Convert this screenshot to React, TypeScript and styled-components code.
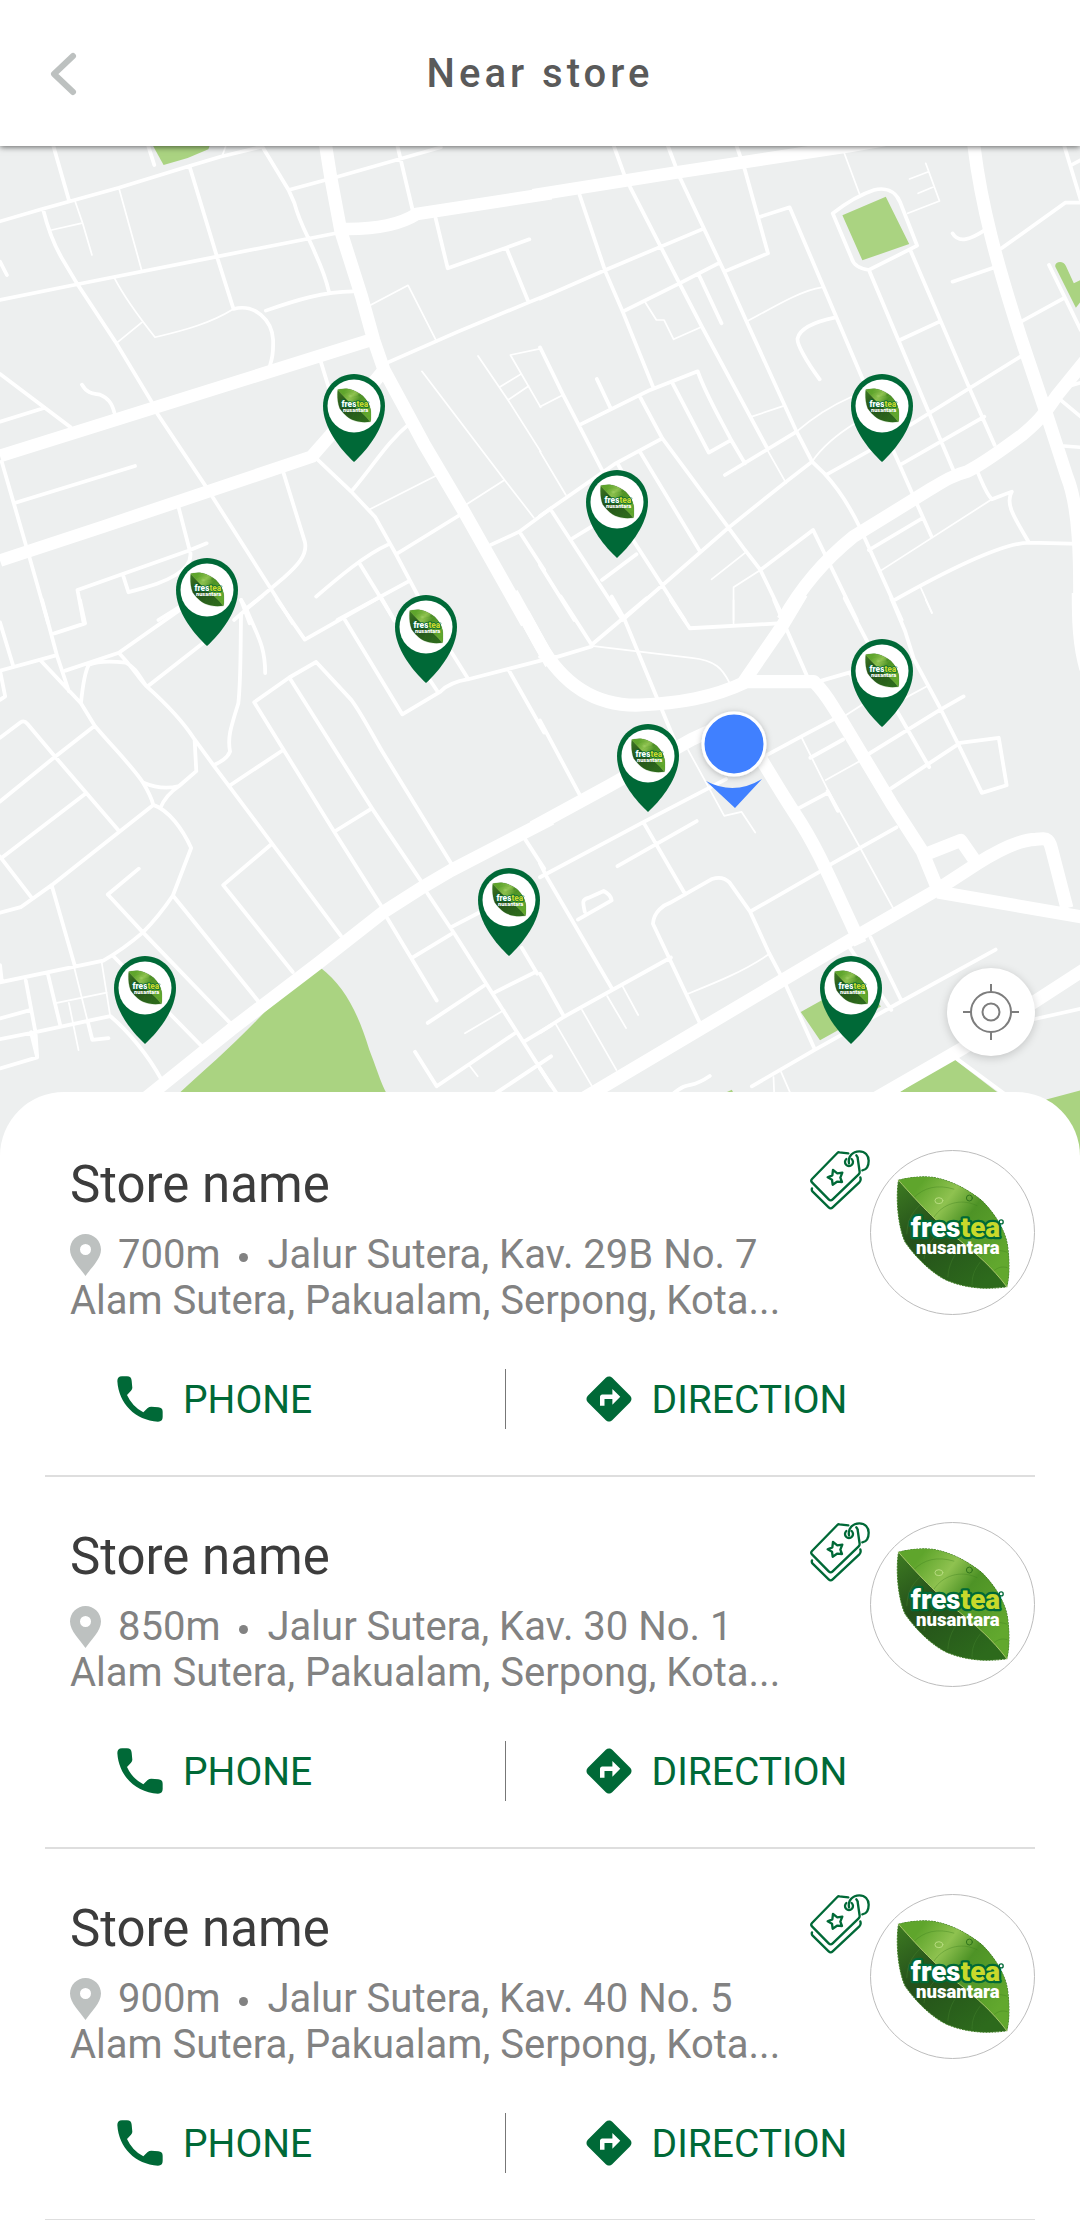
import React from "react";
import styled, { createGlobalStyle } from "styled-components";
import { MdDirections } from "react-icons/md";

const GlobalStyle = createGlobalStyle`
  *, *::before, *::after { box-sizing: border-box; }
  body {
    margin: 0;
    background: #ffffff;
    font-family: Roboto, "Liberation Sans", sans-serif;
  }
  button { font: inherit; color: inherit; background: none; border: 0; padding: 0; cursor: pointer; }
  h1, h2, p, ul { margin: 0; padding: 0; }
`;

const GREEN = "#006937";
const MAP_W = 1080;
const MAP_H = 1010;

/* ---------- layout ---------- */

const Page = styled.div`
  display: flex;
  flex-direction: column;
  min-height: 100vh;
`;

const Header = styled.header`
  display: grid;
  grid-template-columns: 124px 1fr 124px;
  align-items: center;
  height: 146px;
  padding-top: 2px;
  background: #ffffff;
  box-shadow: 0 1px 6px rgba(0, 0, 0, 0.6);
  position: relative;
  z-index: 1;
`;

const BackButton = styled.button`
  display: flex;
  align-items: center;
  justify-content: center;
  height: 100%;
`;

const Title = styled.h1`
  font-size: 40px;
  line-height: 48px;
  font-weight: 500;
  letter-spacing: 4px;
  text-align: center;
  color: #5a5a5a;
`;

const MapArea = styled.section`
  position: relative;
  aspect-ratio: ${MAP_W} / ${MAP_H};
  overflow: hidden;
  background: #edefef;
`;

const MapDrawing = styled.svg`
  display: block;
  width: 100%;
  height: 100%;
`;

const Marker = styled.div<{ $x: number; $y: number }>`
  position: absolute;
  left: calc(100% * ${(p) => p.$x} / ${MAP_W});
  top: calc(100% * ${(p) => p.$y} / ${MAP_H});
  transform: translateX(-50%);
  display: grid;
  justify-items: center;
`;

const LocateButton = styled.button`
  position: absolute;
  right: 45px;
  bottom: 100px;
  display: flex;
  align-items: center;
  justify-content: center;
  width: 88px;
  height: 88px;
  border-radius: 50%;
  background: #ffffff;
  box-shadow: 0 2px 10px rgba(0, 0, 0, 0.18);
`;

const Sheet = styled.main`
  position: relative;
  margin-top: -64px;
  padding: 13px 45px 0;
  border-radius: 64px 64px 0 0;
  background: #ffffff;
`;

const StoreList = styled.ul`
  list-style: none;
`;

const StoreItem = styled.li`
  display: flex;
  flex-direction: column;
  gap: 46px;
  padding: 45px 0 46px;
  border-bottom: 2px solid #dedede;
  &:last-child { border-bottom-width: 1px; }
`;

const Summary = styled.div`
  display: flex;
  align-items: flex-start;
  height: 173px;
`;

const Info = styled.div`
  flex: 1;
  min-width: 0;
  padding: 5px 0 0 25px;
`;

const StoreName = styled.h2`
  margin-bottom: 17px;
  font-size: 51px;
  line-height: 60px;
  font-weight: 400;
  color: #3c3c3c;
`;

const AddressLine = styled.p`
  display: flex;
  align-items: center;
  font-size: 40px;
  line-height: 46px;
  color: #828282;
  white-space: nowrap;
`;

const Distance = styled.span`
  padding-left: 17px;
`;

const Dot = styled.span`
  width: 9px;
  height: 9px;
  margin: 4px 20px 0 18px;
  border-radius: 50%;
  background: #828282;
`;

const LogoFrame = styled.div`
  width: 165px;
  height: 165px;
  border: 1px solid #bdbdbd;
  border-radius: 50%;
`;

const Actions = styled.div`
  display: grid;
  grid-template-columns: 46fr 1px 53fr;
  height: 60px;
`;

const Divider = styled.span`
  background: #777777;
`;

const ActionButton = styled.button<{ $inset: number }>`
  display: flex;
  align-items: center;
  gap: 16px;
  padding-left: ${(p) => p.$inset}px;
  font-size: 39px;
  line-height: 46px;
  color: ${GREEN};
`;

const ActionLabel = styled.span`
  padding-top: 2px;
`;

/* ---------- drawings ---------- */

const BackIcon = () => (
  <svg width="32" height="46" viewBox="0 0 32 46" fill="none" stroke="#bdc1c0" strokeWidth="6" strokeLinecap="round" strokeLinejoin="round" aria-hidden="true">
    <path d="M27 5L8 23L27 41" />
  </svg>
);

const PhoneIcon = () => (
  <svg width="54" height="54" viewBox="0 0 162 162" fill={GREEN} aria-hidden="true">
    <path d="M27 13H42Q55 13 56 26L58 47Q58 52 54 56L42 69Q58 104 91 121L104 108Q109 104 115 104L136 106Q149 107 149 119V135Q149 149 135 149C67 145 17 95 13 27Q13 13 27 13Z" />
  </svg>
);

const PinIcon = () => (
  <svg width="31" height="42" viewBox="0 0 31 42" fill="#bdc1c0" fillRule="evenodd" aria-hidden="true">
    <path d="M15.500 0C24 0 31 7 31 15.500C31 25 21 34 15.500 42C10 34 0 25 0 15.500C0 7 7 0 15.500 0ZM15.500 10A5.500 5.500 0 1 0 15.500 21A5.500 5.500 0 1 0 15.500 10Z" />
  </svg>
);

const TagsIcon = () => (
  <svg width="60" height="60" viewBox="0 0 180 180" fill="none" stroke={GREEN} strokeWidth="7" strokeLinecap="round" strokeLinejoin="round" aria-label="Promo" role="img">
    <path d="M115 10L88 7Q85 6 82 9L6 87Q1 92 6 97L56 148Q62 154 68 148L146 73Q149 70 149 66L143 24Q143 20 139 16" />
    <path d="M6 115Q4 121 8 125L56 172Q62 178 68 172L148 97Q154 91 151 82" />
    <path d="M125 27A12 12 0 1 1 109 27M117 40C113 20 128 4 148 4C165 4 176 16 176 32C176 48 169 59 157 61" />
    <path d="M69 60L82 70L97 68L91 83L96 96L81 95L68 104L66 89L53 82L67 76Z" />
  </svg>
);

const LocateIcon = () => (
  <svg width="56" height="56" viewBox="0 0 56 56" fill="none" stroke="#7d7d7d" strokeWidth="2" aria-hidden="true">
    <circle cx="28" cy="28" r="20" />
    <circle cx="28" cy="28" r="8.500" />
    <path d="M28 0V8M28 48V56M0 28H8M48 28H56" />
  </svg>
);

const LEAF =
  "M83 88C125 78 160 76 190 80C245 90 295 118 335 150C375 190 405 240 412 285C419 340 417 380 410 410C340 420 280 412 228 390C185 370 135 322 103 275C82 230 74 145 83 88Z";
const LEAF_TOP =
  "M83 88C125 78 160 76 190 80C245 90 295 118 335 150C375 190 405 240 412 285C419 340 417 380 410 410C365 350 320 312 268 270C220 235 150 165 83 88Z";

const LeafGradients = () => (
  <defs>
    <linearGradient id="leafDark" x1="0" y1="0" x2="0.700" y2="1">
      <stop offset="0" stopColor="#3f7d22" />
      <stop offset="0.450" stopColor="#24501a" />
      <stop offset="1" stopColor="#2d6a1c" />
    </linearGradient>
    <linearGradient id="leafLight" x1="0.100" y1="0.200" x2="0.900" y2="0.800">
      <stop offset="0" stopColor="#5fa52c" />
      <stop offset="0.280" stopColor="#8fc250" />
      <stop offset="0.520" stopColor="#4e9326" />
      <stop offset="1" stopColor="#62a82e" />
    </linearGradient>
  </defs>
);

const LogoArt = () => (
  <>
    <path d={LEAF} fill="url(#leafDark)" stroke="#3a7a1f" strokeWidth="3" strokeDasharray="6 3" />
    <path d={LEAF_TOP} fill="url(#leafLight)" />
    <g fill="none" strokeLinecap="round">
      <path d="M130 140C160 110 200 100 250 115M190 200C215 160 270 140 320 165M330 318C350 300 380 295 410 305M370 362C385 350 395 348 411 352" stroke="#3b7d1e" strokeWidth="3" opacity="0.350" />
      <path d="M150 160C120 190 110 210 108 250M215 235C180 270 165 290 160 325M275 285C245 320 235 345 232 380M330 335C310 360 305 380 305 405" stroke="#4b8a30" strokeWidth="3" opacity="0.350" />
      <path d="M83 88C150 165 220 235 268 270C320 312 365 350 410 410" stroke="#a9c66a" strokeWidth="3" />
      <ellipse cx="205" cy="150" rx="12" ry="9" stroke="#b7dc80" strokeWidth="3" />
      <circle cx="297" cy="142" r="9" stroke="#2f741b" strokeWidth="3" />
    </g>
    <g fontFamily='Roboto, "Open Sans", sans-serif' fontWeight="900" textAnchor="middle">
      <text x="255" y="260" fontSize="84" fill="#ffffff" stroke={GREEN} strokeWidth="14" strokeLinejoin="round" paintOrder="stroke">
        fres<tspan fill="#c8d92b">tea</tspan>
      </text>
      <text x="262" y="310" fontSize="56" fill="#ffffff">nusantara</text>
    </g>
    <circle cx="393" cy="214" r="6" fill="#ffffff" stroke={GREEN} strokeWidth="4" />
  </>
);

const StoreLogo = () => (
  <svg width="163" height="163" viewBox="0 0 492 492" role="img" aria-label="Frestea Nusantara">
    <LogoArt />
  </svg>
);

const StorePin = () => (
  <svg width="62" height="88" viewBox="0 0 62 88" role="img" aria-label="Store location">
    <path d="M31 0C48 0 62 14 62 32C62 54 44 76 31 88C18 76 0 54 0 32C0 14 14 0 31 0Z" fill={GREEN} />
    <circle cx="31" cy="32" r="26.500" fill="#ffffff" />
    <svg x="6.500" y="7" width="49" height="49" viewBox="0 0 492 492">
      <LogoArt />
    </svg>
  </svg>
);

const UserPin = () => (
  <svg width="90" height="110" viewBox="0 0 90 110" role="img" aria-label="Your location">
    <defs>
      <filter id="userShadow" x="-20%" y="-20%" width="140%" height="140%">
        <feDropShadow dx="0" dy="1" stdDeviation="3" floodOpacity="0.250" />
      </filter>
    </defs>
    <path d="M17 76Q45 91 73 74L46 103Z" fill="#4080ff" />
    <circle cx="45" cy="39" r="31" fill="#4080ff" stroke="#ffffff" strokeWidth="3" filter="url(#userShadow)" />
  </svg>
);

type Tile = { transform: string; parks?: string; major: string; minor: string; lanes: string };

/* The street map is stored as four tiles, each with its own drawing units. */
const TILES: Tile[] = [
  {
    transform: "translate(0 -6) scale(0.3444 0.3333)",
    parks: "M435 0L475 75L545 54L605 28L615 0Z",
    major:
      "M943 0L960 110L990 275L1050 470L1085 600L1115 690L1230 910L1350 1120L1530 1450M1000 267C1080 268 1160 255 1210 222L1600 160M0 948L1070 602M0 1262L300 1160L905 950L960 885L1115 690",
    minor:
      "M150 0L200 180M0 244L120 208L345 143L550 78L640 50L760 20M425 0L448 75M0 480L225 433L630 350L975 280M125 208C140 270 160 320 180 355L225 433L335 605L440 785M455 818L595 1035L790 1352L850 1450M550 78L630 350L678 507C740 490 790 540 793 600C794 640 790 655 783 680M750 0L838 150L855 190C870 250 900 300 915 340C935 385 945 410 955 455M838 150L980 110L1280 22M1150 0L1198 210M772 512C860 480 940 455 1025 454M1265 235L1300 385L1470 323L1537 298M1470 323L1535 487M1125 668L1330 575L1535 487L1600 460M0 365L20 405M0 702L205 862M0 845L130 803M238 734C255 765 275 760 290 764C315 775 325 790 332 818M5 965L40 1090L85 1250L140 1450M40 1090L392 978M930 660L955 745M918 955L1020 1055L1090 1132L1150 1243L1220 1380M1190 850C1120 910 1090 970 1020 1055M822 995L885 1205C895 1245 860 1280 825 1312L715 1408L680 1440M518 1100L553 1240C555 1270 535 1290 510 1305C470 1330 430 1340 373 1357L358 1308M600 1210L545 1233L225 1350L243 1450M1150 1243L1335 1125M1425 1215L1508 1175L1600 1105M1508 1175L1580 1290M918 1370C980 1315 1060 1245 1125 1215M1045 1272L1145 1440M980 1440L1185 1325M700 1380L725 1450M460 1440L530 1395",
    lanes:
      "M218 184L240 250L267 345M150 270L235 250M345 143L411 390M332 414C365 480 410 540 450 592C540 570 610 550 678 507M411 548L340 608M1075 496L1185 436L1268 605M1070 1110L1270 1005M1225 694L1465 1020L1550 1133M1355 1093L1465 1020M1388 648L1475 780L1570 935M1450 742L1510 704M1475 780L1535 738M1570 626L1482 645L1570 802M655 20L645 48",
  },
  {
    transform: "translate(540 -6) scale(0.3444 0.3333)",
    parks:
      "M878 226L1004 170L1072 312L936 361ZM1497 382C1490 365 1520 358 1527 378L1550 430L1570 420L1570 485L1556 503Z",
    major:
      "M-20 166L400 97L900 18L1000 0M1258 0C1280 200 1330 380 1395 590L1470 820L1530 1010C1565 1100 1570 1250 1566 1450M1600 640L1500 768C1460 830 1440 850 1400 885C1340 930 1290 970 1240 995C1200 1005 1170 1025 1130 1050L910 1190C850 1240 770 1320 705 1440",
    minor:
      "M208 0L245 105L262 142L405 430L470 560L660 925M365 0L405 110L535 395L600 545L745 875L790 965L825 1000C870 1050 900 1100 930 1165L1050 1440M115 165L190 395L240 515L330 745M0 476L190 390L470 268M565 0L595 90L662 340L535 395M640 230L725 202L938 720M240 515L405 430L515 372M460 402L527 550M0 622L65 760L180 990M115 855L320 750L458 694C480 760 520 830 555 900L595 970M165 717L205 805M385 730L490 938L555 900M290 770L355 895L545 1160L595 1230L640 1290L710 1440M0 1128L220 970L355 895M225 970L300 1110M290 935L465 1235M537 1005L745 875M35 1115L240 1440M95 1195L150 1160M180 1320L280 1243M240 1440L545 1165L715 1025L790 965M270 1200L420 1440M0 1275L100 1440M640 1290L793 1170L920 1440M830 1005L960 930M955 1230L1110 1135M812 718C770 660 745 610 748 595C755 565 800 545 855 533M850 220C900 180 940 160 970 150C1000 142 1030 150 1045 185L1095 317L955 390C925 385 910 375 905 355ZM955 390L1130 820L1200 990M1075 330L1245 740L1320 915M1045 600L1160 545M1075 855L1130 820L1395 650M1045 975L1290 830M1025 930L1085 1070L1137 1190M1198 280C1215 310 1250 300 1295 268M1198 425L1325 380M1340 325L1525 188L1570 188M1520 10L1570 180M1543 75L1570 60M1478 375L1570 570M1400 543L1520 475M1500 770L1570 830M1530 740L1570 728M1520 918L1570 922M1270 995C1285 1030 1295 1060 1312 1078L1370 1055C1350 1090 1375 1130 1420 1208M1025 1383C1150 1310 1330 1210 1420 1208L1570 1212",
    lanes:
      "M882 35L928 163M1120 70L1160 183L1068 220M1073 117L1128 95M1098 160L1140 142M0 800L65 766M305 486L338 540L360 540L388 598L470 560M600 545C680 500 760 450 818 442M615 830L710 797M745 875C800 825 850 795 905 770M790 965C820 920 860 885 915 850M660 930L715 1030M0 935L75 1065M498 1318L600 1235M640 1290L562 1342L562 1440M985 1295L1312 1078M1105 1342L1138 1418",
  },
  {
    transform: "translate(0 454) scale(0.3444)",
    parks: "M520 1432C600 1360 680 1290 770 1195C830 1145 890 1095 930 1067C1000 1120 1040 1200 1072 1305C1090 1350 1105 1400 1122 1432L1122 1500L520 1500Z",
    major: "M1486 -20L1600 185M400 1465L670 1248L930 1050L1115 905L1230 832L1310 785L1600 635",
    minor:
      "M122 0L165 160L200 265M232 0L247 68L158 97M0 65L38 190M0 205L165 160M0 205L15 280L0 290M120 178L235 300L275 365C330 430 390 490 415 530C430 555 440 575 445 595C490 610 530 665 555 720L502 858C460 920 430 950 415 965C380 995 330 1030 300 1047L0 1110M190 205L345 153L520 30M345 153C390 200 400 225 425 250C470 290 530 350 565 405L620 480L990 975M235 300C240 250 245 210 258 188C290 175 330 178 365 182C400 200 405 225 425 250M430 250L590 125M700 40C698 130 700 230 692 300C670 370 660 400 668 440C660 460 640 470 620 480M715 25C745 100 770 130 770 212M700 0L715 25L760 -10M565 405L570 497L520 540C490 560 475 580 465 605M415 530C450 545 490 548 520 540M0 400L60 355Q70 348 80 360L160 455L345 670M0 585L160 455L275 365M10 745L245 565M0 745L90 862M0 908L60 892L150 828L445 595M150 828L218 1065M403 780L313 855L415 965L670 1230M502 858L750 1165M850 1080L648 828L787 710M665 540L820 437M1108 890L975 680L738 297L840 225L918 180L1020 290C1050 330 1080 390 1110 440L1310 765M840 225L1080 605L1225 820M975 670L1080 605M805 0L885 115L1105 -10M1000 55L1168 332L1280 265C1300 245 1330 235 1360 230L1600 168M1310 150L1360 230M1105 -10L1145 60M1240 220L1270 265M1478 205L1580 385M0 1060L5 1105M75 1105L103 1255L108 1328L0 1360M90 1255L108 1328M0 1215L90 1190M0 1275L103 1255L320 1208C370 1250 430 1320 470 1395M140 1090L175 1235M255 1225L268 1277L315 1272M330 1035L590 1300M1125 925L1268 1163M1195 1040L1310 970M1240 850L1320 970L1600 1410M1310 950L1400 903M1525 695L1580 780M1242 1228L1405 1120M1435 1140L1555 1080M1515 1010L1560 1085M1205 1312L1268 1412L1495 1258M1440 1432L1600 1325M1525 1280L1600 1235",
    lanes: "M215 1065L255 1225M295 1050L320 1208M165 1170L310 1140M200 1170L228 1307M1350 1258L1465 1190M1362 1350L1387 1383",
  },
  {
    transform: "translate(540 454) scale(0.3444)",
    parks:
      "M757 1196L930 1100L990 1180L813 1278ZM1040 1432L1197 1329L1332 1432L1332 1460L1040 1460ZM1470 1450L1600 1416L1600 1700L1470 1700ZM535 1432L557 1422L562 1432Z",
    major:
      "M-48 40L0 128C80 270 190 308 290 305C400 300 500 285 600 237L795 237C830 270 850 310 870 340L1020 590L1110 730L1155 840M590 240L700 80L760 -20M1563 -20C1563 60 1565 130 1585 200M-20 660L200 540L440 405L560 350C620 410 660 500 740 620C800 710 830 780 930 998M130 1445L930 970L1155 840L1270 765C1350 715 1400 695 1440 695C1480 690 1478 695 1490 740L1530 895M1110 742L1222 698L1265 760M1155 848L1600 925M960 1455L1230 1300L1600 1060",
    minor:
      "M60 -10L150 130L310 -5M0 165L50 165L150 135M208 -10L245 55L340 285L400 430M380 0L435 82L690 68M680 0L705 60L775 220M885 -5L950 120M1020 -5L1060 90L1085 170L1160 310L1215 420L1283 560L1355 538L1332 400L1220 415L1015 550M950 450L1160 320L1230 280M815 235L900 210L915 245M650 455L770 390L855 345M1035 320L1130 485M785 458L880 405M745 608L835 560M835 555L865 612M840 770L1035 660M610 905L810 790M0 350L115 565M0 805L300 645L540 520M300 645L422 855M225 773L455 642M0 765L20 805L210 1130M130 905C125 880 120 870 140 865L185 845Q205 855 208 872L110 928M465 1230L328 940C330 905 360 885 380 878L500 810Q530 800 550 820L610 905L665 1025L710 1110L798 1305M0 1085L70 1210M0 1255L70 1210L380 1038M0 1360L50 1435M960 980L1050 1165M900 1010L1020 1190M615 1412L800 1305L1050 1165L1323 1015M1430 1218L1600 1180M1197 1322L1370 1450M385 1435C440 1390 430 1425 493 1382",
    lanes:
      "M562 0L562 68M150 133L440 168C510 175 530 200 550 240M880 340L950 295M1120 0L1138 38M1050 290L1125 250M760 400L835 550L930 720L1028 900M830 523L925 470M430 435L535 627L585 615L625 675M430 1143C500 1115 590 1080 665 1028M195 1150L250 1243M240 1122L285 1205M122 1190L222 1365M45 1230L150 1410M678 1385L680 1435M700 1370L728 1435",
  },
];

const StreetMap = () => (
  <MapDrawing viewBox={`0 0 ${MAP_W} ${MAP_H}`} preserveAspectRatio="xMidYMid slice" role="img" aria-label="Street map">
    <LeafGradients />
    {TILES.map((t) => (
      <g key={t.transform} transform={t.transform} fill="none" stroke="#ffffff" strokeLinejoin="round">
        {t.parks && <path d={t.parks} fill="#aad381" stroke="none" />}
        <path d={t.lanes} strokeWidth="5" strokeLinecap="round" />
        <path d={t.minor} strokeWidth="11" strokeLinecap="round" />
        <path d={t.major} strokeWidth="38" />
      </g>
    ))}
  </MapDrawing>
);

/* ---------- data ---------- */

const PINS = [
  { x: 354, y: 228 },
  { x: 882, y: 228 },
  { x: 617, y: 324 },
  { x: 207, y: 412 },
  { x: 426, y: 449 },
  { x: 882, y: 493 },
  { x: 648, y: 578 },
  { x: 509, y: 722 },
  { x: 145, y: 810 },
  { x: 851, y: 810 },
];

const STORES = [
  { distance: "700m", street: "Jalur Sutera, Kav. 29B No. 7" },
  { distance: "850m", street: "Jalur Sutera, Kav. 30 No. 1" },
  { distance: "900m", street: "Jalur Sutera, Kav. 40 No. 5" },
];

const AREA = "Alam Sutera, Pakualam, Serpong, Kota...";

export default function App() {
  return (
    <Page>
      <GlobalStyle />
      <Header>
        <BackButton type="button" aria-label="Back">
          <BackIcon />
        </BackButton>
        <Title>Near store</Title>
      </Header>
      <MapArea>
        <StreetMap />
        {PINS.map((p) => (
          <Marker key={`${p.x}-${p.y}`} $x={p.x} $y={p.y}>
            <StorePin />
          </Marker>
        ))}
        <Marker $x={734} $y={559}>
          <UserPin />
        </Marker>
        <LocateButton type="button" aria-label="Show my location">
          <LocateIcon />
        </LocateButton>
      </MapArea>
      <Sheet>
        <StoreList>
          {STORES.map((s) => (
            <StoreItem key={s.distance}>
              <Summary>
                <Info>
                  <StoreName>Store name</StoreName>
                  <AddressLine>
                    <PinIcon />
                    <Distance>{s.distance}</Distance>
                    <Dot />
                    <span>{s.street}</span>
                  </AddressLine>
                  <AddressLine>{AREA}</AddressLine>
                </Info>
                <TagsIcon />
                <LogoFrame>
                  <StoreLogo />
                </LogoFrame>
              </Summary>
              <Actions>
                <ActionButton type="button" $inset={68}>
                  <PhoneIcon />
                  <ActionLabel>PHONE</ActionLabel>
                </ActionButton>
                <Divider />
                <ActionButton type="button" $inset={76}>
                  <MdDirections size={54} aria-hidden="true" />
                  <ActionLabel>DIRECTION</ActionLabel>
                </ActionButton>
              </Actions>
            </StoreItem>
          ))}
        </StoreList>
      </Sheet>
    </Page>
  );
}
